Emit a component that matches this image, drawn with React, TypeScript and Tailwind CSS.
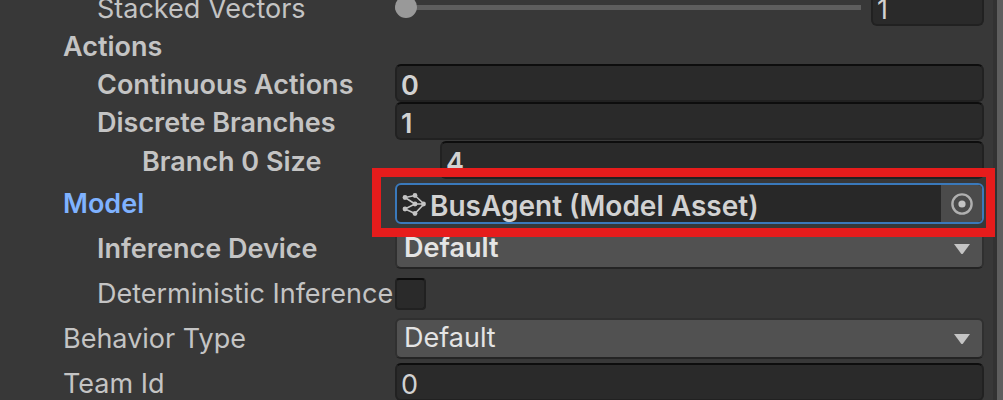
import { useState, type ReactNode } from "react";

const inputBox =
  "h-[38px] w-full min-w-0 rounded-md border-2 border-[#212121] border-t-[#0d0d0d] bg-[#2a2a2a] px-1 pt-1 text-[#d2d2d2] outline-none";

const indents = ["pl-[63px]", "pl-[97px]", "pl-[142px]"];

type RowProps = {
  id?: string;
  label: string;
  level?: number;
  bold?: boolean;
  active?: boolean;
  tall?: boolean;
  children?: ReactNode;
};

function Row({ id, label, level = 0, bold, active, tall, children }: RowProps) {
  const Tag = id ? "label" : "div";
  return (
    <div
      className={`flex items-center ${tall ? "h-[41px]" : "h-[38px]"} ${bold ? "font-semibold" : "font-normal"}`}
    >
      <Tag
        htmlFor={id}
        className={`w-[395px] shrink-0 whitespace-nowrap ${tall ? "" : "pt-1"} ${indents[level]} ${active ? "text-[#7fb2ff]" : "text-[#c4c4c4]"}`}
      >
        {label}
      </Tag>
      <div className="flex min-w-0 flex-1 items-center">{children}</div>
    </div>
  );
}

function NumberField({ id, initial }: { id: string; initial: string }) {
  const [value, setValue] = useState(initial);
  return (
    <input
      id={id}
      type="text"
      inputMode="numeric"
      value={value}
      onChange={(e) => setValue(e.target.value)}
      className={inputBox}
    />
  );
}

function Dropdown({ id, options }: { id: string; options: string[] }) {
  return (
    <div className="relative w-full">
      <select
        id={id}
        className="block h-[41px] w-full appearance-none rounded-md border-2 border-[#303030] border-b-[#242424] bg-[#515151] pr-12 pb-[2px] pl-[7px] text-[#e4e4e4] outline-none"
      >
        {options.map((option) => (
          <option key={option}>{option}</option>
        ))}
      </select>
      <svg
        aria-hidden="true"
        viewBox="0 0 16 10"
        className="pointer-events-none absolute top-4 right-[14px] h-[10px] w-4"
      >
        <path d="M0 0H16L9 9.4Q8 10.4 7 9.4Z" fill="#c4c4c4" />
      </svg>
    </div>
  );
}

function ModelIcon() {
  return (
    <svg aria-hidden="true" viewBox="0 0 24 24" className="h-6 w-6 shrink-0">
      <g stroke="#c4c4c4" strokeWidth="1.6" fill="none">
        <path d="M3 5.5L13 3.5L22 12L13 21.5L3 17L13 12L3 5.5M13 12H22" />
      </g>
      <g fill="#c4c4c4">
        <circle cx="3" cy="5.5" r="2.4" />
        <circle cx="13" cy="3.5" r="2.4" />
        <circle cx="3" cy="17" r="2.4" />
        <circle cx="13" cy="12" r="2.4" />
        <circle cx="13" cy="21.5" r="2.4" />
        <circle cx="21.5" cy="12" r="2.4" />
      </g>
    </svg>
  );
}

function ModelField() {
  return (
    <div className="relative w-full">
      <div className="flex h-[41px] items-center overflow-hidden rounded-md border-2 border-[#3a79bb] bg-[#282828] pl-[5px]">
        <ModelIcon />
        <input
          id="model"
          readOnly
          value="BusAgent (Model Asset)"
          className="h-full min-w-0 flex-1 bg-transparent pt-1 pl-1 text-[28px] text-[#d2d2d2] outline-none"
        />
        <button
          type="button"
          aria-label="Select model"
          className="flex h-full w-[41px] shrink-0 items-center justify-center rounded-r bg-[#4b4b4b]"
        >
          <svg viewBox="0 0 22 22" className="h-[22px] w-[22px]">
            <circle cx="11" cy="11" r="9.6" fill="none" stroke="#b0b0b0" strokeWidth="2.4" />
            <circle cx="11" cy="11" r="3.6" fill="#c4c4c4" />
          </svg>
        </button>
      </div>
      <div className="pointer-events-none absolute -top-[15px] -right-[11px] -bottom-[13px] -left-[23px] border-[9px] border-[#e61c1c]" />
    </div>
  );
}

export default function App() {
  return (
    <main className="flex h-screen overflow-hidden bg-[#383838] font-['Inter',sans-serif] text-[27px] leading-8">
      <form className="-mt-3 min-w-0 flex-1 pr-[9px]">
        <Row id="stacked" label="Stacked Vectors" level={1}>
          <input
            id="stacked"
            type="range"
            min={1}
            max={50}
            defaultValue={1}
            className="mr-[10px] h-[22px] min-w-0 flex-1 appearance-none bg-transparent [&::-webkit-slider-runnable-track]:h-[5px] [&::-webkit-slider-runnable-track]:bg-[#5e5e5e] [&::-webkit-slider-thumb]:-mt-[9px] [&::-webkit-slider-thumb]:h-[22px] [&::-webkit-slider-thumb]:w-[22px] [&::-webkit-slider-thumb]:appearance-none [&::-webkit-slider-thumb]:rounded-full [&::-webkit-slider-thumb]:bg-[#999999]"
          />
          <div className="w-[113px] shrink-0">
            <NumberField id="stacked-value" initial="1" />
          </div>
        </Row>
        <Row label="Actions" bold />
        <Row id="continuous" label="Continuous Actions" level={1} bold>
          <NumberField id="continuous" initial="0" />
        </Row>
        <Row id="discrete" label="Discrete Branches" level={1} bold>
          <NumberField id="discrete" initial="1" />
        </Row>
        <div className="mt-px flex flex-col gap-1">
          <Row id="branch" label="Branch 0 Size" level={2} bold>
            <div className="w-full pl-[45px]">
              <NumberField id="branch" initial="4" />
            </div>
          </Row>
          <div className="relative z-10">
            <Row id="model" label="Model" bold active tall>
              <ModelField />
            </Row>
          </div>
          <Row id="device" label="Inference Device" level={1} bold tall>
            <Dropdown id="device" options={["Default", "GPU", "Burst", "CPU"]} />
          </Row>
          <Row id="deterministic" label="Deterministic Inference" level={1} tall>
            <input
              id="deterministic"
              type="checkbox"
              className="h-8 w-[31px] appearance-none rounded-sm border-2 border-[#212121] border-t-[#0d0d0d] bg-[#2a2a2a] checked:bg-[#7fb2ff]"
            />
          </Row>
          <Row id="behavior" label="Behavior Type" tall>
            <Dropdown id="behavior" options={["Default", "Heuristic Only", "Inference Only"]} />
          </Row>
          <Row id="team" label="Team Id">
            <NumberField id="team" initial="0" />
          </Row>
        </div>
      </form>
      <div className="w-1 shrink-0 bg-[#323232]" />
      <div className="w-[6px] shrink-0 bg-[#5e5e5e]" />
    </main>
  );
}
